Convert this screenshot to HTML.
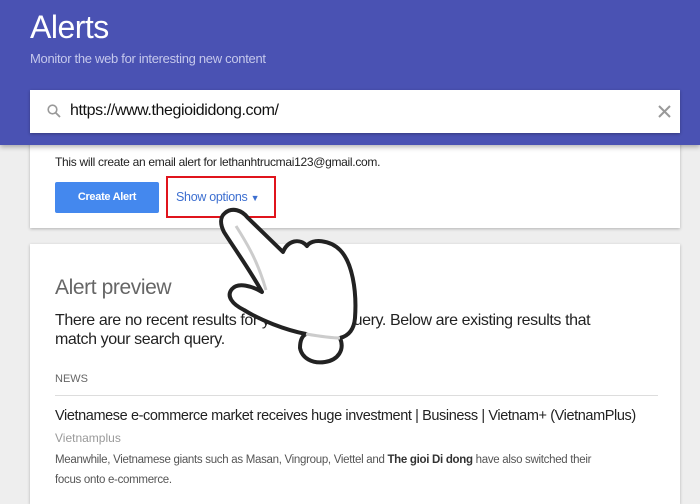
<!DOCTYPE html>
<html><head><style>
body{margin:0;width:700px;height:494px;overflow:hidden;background:#eeeeee;font-family:"Liberation Sans",sans-serif;position:relative}
.hdr{position:absolute;left:0;top:0;width:700px;height:145px;background:#4a52b3;box-shadow:0 2px 5px rgba(0,0,0,.3)}
.t1{position:absolute;left:30px;top:9px;color:#fff;font-size:32px;letter-spacing:-0.5px}
.t2{position:absolute;left:30px;top:51px;color:#c5c8ec;font-size:13px;letter-spacing:-0.3px}
.sb{position:absolute;left:30px;top:90px;width:650px;height:43px;background:#fff;box-shadow:0 1px 3px rgba(0,0,0,.3)}
.card{position:absolute;left:30px;width:650px;background:#fff;box-shadow:0 1px 3px rgba(0,0,0,.25)}
.btn{position:absolute;left:25px;top:42px;width:104px;height:31px;background:#4488ee;border-radius:2px;color:#fff;font-weight:bold;font-size:11px;text-align:center;line-height:31px;letter-spacing:-0.3px}
</style></head><body>
<div class="card" style="top:140px;height:88px">
 <div style="position:absolute;left:25px;top:15px;font-size:12px;color:#222;letter-spacing:-0.3px">This will create an email alert for lethanhtrucmai123@gmail.com.</div>
 <div class="btn">Create Alert</div>
 <div style="position:absolute;left:136px;top:36px;width:110px;height:42px;border:2px solid #e0141c;box-sizing:border-box"></div>
 <div style="position:absolute;left:146px;top:50px;font-size:12.5px;color:#3d6fd0;letter-spacing:-0.3px">Show options <span style="font-size:9px">▼</span></div>
</div>
<div class="hdr">
 <div class="t1">Alerts</div>
 <div class="t2">Monitor the web for interesting new content</div>
 <div class="sb">
  <svg style="position:absolute;left:17px;top:14px" width="14" height="14" viewBox="0 0 14 14"><circle cx="5.5" cy="5.5" r="4.3" fill="none" stroke="#999" stroke-width="1.6"/><path d="M8.7 8.7L13 13" stroke="#999" stroke-width="1.8"/></svg>
  <div style="position:absolute;left:40px;top:12px;font-size:16px;color:#111;letter-spacing:-0.4px">https://www.thegioididong.com/</div>
  <svg style="position:absolute;left:628px;top:15px" width="13" height="13" viewBox="0 0 13 13"><path d="M1 1L12 12M12 1L1 12" stroke="#999" stroke-width="2"/></svg>
 </div>
</div>
<div class="card" style="top:244px;height:260px">
 <div style="position:absolute;left:25px;top:32px;font-size:21px;color:#666;letter-spacing:-0.4px">Alert preview</div>
 <div style="position:absolute;left:25px;top:67px;width:575px;font-size:16px;line-height:19px;color:#222;letter-spacing:-0.4px">There are no recent results for your search query. Below are existing results that match your search query.</div>
 <div style="position:absolute;left:25px;top:129px;font-size:11px;color:#666">NEWS</div>
 <div style="position:absolute;left:25px;top:151px;width:603px;height:1px;background:#ddd"></div>
 <div style="position:absolute;left:25px;top:164px;font-size:14.5px;color:#222;letter-spacing:-0.4px">Vietnamese e-commerce market receives huge investment | Business | Vietnam+ (VietnamPlus)</div>
 <div style="position:absolute;left:25px;top:187px;font-size:12px;color:#999">Vietnamplus</div>
 <div style="position:absolute;left:25px;top:206px;width:640px;font-size:11.5px;line-height:20px;color:#555;letter-spacing:-0.3px">Meanwhile, Vietnamese giants such as Masan, Vingroup, Viettel and <b style="color:#333">The gioi Di dong</b> have also switched their<br>focus onto e-commerce.</div>
</div>
<svg style="position:absolute;left:0;top:0" width="700" height="494" viewBox="0 0 700 494">
<path d="M225 213 C232 207 242 210 248 218 L283 252 C288 240 300 238 307 246 C312 238 330 240 340 250 C352 262 357 290 355 318 C354 330 348 336 340 338 C345 350 338 360 325 362 C312 364 302 358 300 348 C300 340 302 336 306 334 C285 330 260 320 244 310 C232 304 226 296 232 289 C238 282 252 286 262 292 C250 270 232 245 224 232 C220 224 220 217 225 213 Z" fill="#fff" stroke="#222" stroke-width="4" stroke-linejoin="round"/>
<path d="M236 226 C248 245 258 262 266 290 M306 334 C318 336 332 338 340 338" fill="none" stroke="#ccc" stroke-width="3"/>
</svg>
</body></html>
